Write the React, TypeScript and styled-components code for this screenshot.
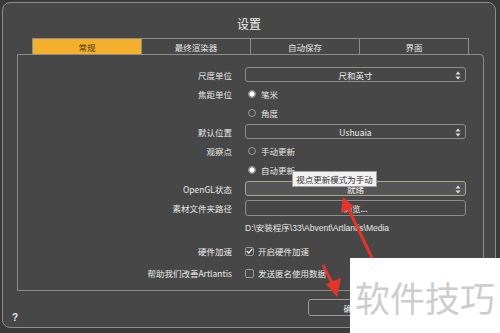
import React from 'react';
import styled, { createGlobalStyle } from 'styled-components';

const GlobalStyle = createGlobalStyle`
	html, body {
		margin: 0;
		padding: 0;
		background: #3a3a3a;
		width: 500px;
		height: 333px;
		overflow: hidden;
	}
	body {
		font-family: "Noto Sans CJK SC", "Liberation Sans", sans-serif;
		color: #e8e8e8;
	}
`;

const Stage = styled.div`
	position: relative;
	width: 500px;
	height: 333px;
	overflow: hidden;
`;

const Window = styled.div`
	position: relative;
	margin: 2px 0 0 2px;
	width: 492px;
	height: 324px;
	background: #474747;
	border: 1px solid #8c8c8c;
	border-radius: 8px;
	display: flex;
	flex-direction: column;
`;

const Title = styled.div`
	height: 35px;
	display: flex;
	align-items: center;
	justify-content: center;
	font-size: 12px;
	color: #f0f0f0;
	padding-top: 5px;
	box-sizing: border-box;
`;

const Tabs = styled.div`
	display: flex;
	margin-left: 29px;
	width: 437px;
	height: 16px;
	position: relative;
	z-index: 1;
`;

const Tab = styled.div<{ $active?: boolean }>`
	flex: 1;
	display: flex;
	align-items: center;
	justify-content: center;
	font-size: 8.5px;
	background: ${(p) => (p.$active ? '#f4b02c' : '#474747')};
	color: ${(p) => (p.$active ? '#4a3510' : '#e8e8e8')};
	border: 1px solid #8c8c8c;
	border-bottom: none;
	border-left: ${(p) => (p.$active ? '1px solid #8c8c8c' : 'none')};
	box-sizing: border-box;
`;

const Panel = styled.div`
	margin: 0 11px 0 14px;
	height: 237px;
	border: 1px solid #8c8c8c;
	border-radius: 0 4px 0 0;
	box-sizing: border-box;
	padding: 10px 16px 0 0;
	display: flex;
	flex-direction: column;
`;

const Row = styled.div<{ $h?: number; $mt?: number }>`
	display: grid;
	grid-template-columns: 214px 221px;
	column-gap: 13px;
	align-items: center;
	height: ${(p) => p.$h ?? 19}px;
	margin-top: ${(p) => p.$mt ?? 0}px;
	position: relative;
`;

const Label = styled.div`
	text-align: right;
	font-size: 8.5px;
	color: #e8e8e8;
	white-space: nowrap;
`;

const Select = styled.div<{ $hl?: boolean }>`
	height: 15px;
	border: 1px solid ${(p) => (p.$hl ? '#a8a88c' : '#8c8c8c')};
	background: ${(p) => (p.$hl ? '#555555' : '#474747')};
	border-radius: 3px;
	box-sizing: border-box;
	display: flex;
	align-items: center;
	justify-content: center;
	position: relative;
	font-size: 8.5px;
	color: #f0f0f0;
`;

const Arrows = styled.svg`
	position: absolute;
	right: 4px;
	top: 3px;
`;

const Button = styled.div`
	height: 16px;
	border: 1px solid #8c8c8c;
	border-radius: 3px;
	box-sizing: border-box;
	display: flex;
	align-items: center;
	justify-content: center;
	font-size: 8.5px;
	color: #f0f0f0;
`;

const Option = styled.div`
	display: flex;
	align-items: center;
	gap: 5px;
	font-size: 8.5px;
	color: #e8e8e8;
	padding-left: 3px;
`;

const Radio = styled.span<{ $on?: boolean }>`
	width: 8px;
	height: 8px;
	border-radius: 50%;
	border: 1px solid #9a9a9a;
	box-sizing: border-box;
	background: ${(p) => (p.$on ? 'radial-gradient(circle, #ffffff 0 2.2px, #c8c8c8 2.6px, #474747 3.2px)' : '#474747')};
`;

const Check = styled.span`
	width: 9px;
	height: 9px;
	border: 1px solid #9a9a9a;
	border-radius: 2px;
	box-sizing: border-box;
	display: flex;
	align-items: center;
	justify-content: center;
`;

const CheckOption = styled(Option)`
	padding-left: 0;
	gap: 4px;
`;

const PathText = styled.div`
	font-size: 8.5px;
	color: #e8e8e8;
	font-family: "Liberation Sans", "Noto Sans CJK SC", sans-serif;
	white-space: nowrap;
`;

const Tooltip = styled.div`
	position: absolute;
	left: 274px;
	top: -8px;
	width: 85px;
	height: 16px;
	background: #f2f2f2;
	border: 1px solid #a0a0a0;
	box-sizing: border-box;
	color: #333;
	font-size: 8.5px;
	display: flex;
	align-items: center;
	justify-content: center;
	z-index: 2;
`;

const Footer = styled.div`
	flex: 1;
	display: flex;
	align-items: center;
	padding: 0 0 0 9px;
	position: relative;
`;

const Help = styled.div`
	font-family: "Liberation Sans", sans-serif;
	font-weight: bold;
	font-size: 10px;
	color: #e8e8e8;
	margin-top: 16px;
`;

const OkButton = styled.div`
	position: absolute;
	left: 305px;
	top: 8px;
	width: 88px;
	height: 17px;
	border: 1px solid #9a9a9a;
	border-radius: 3px;
	box-sizing: border-box;
	display: flex;
	align-items: center;
	justify-content: center;
	font-size: 8.5px;
	color: #f0f0f0;
`;

const Watermark = styled.div`
	position: absolute;
	left: 350px;
	top: 258px;
	width: 150px;
	height: 75px;
	background: #ffffff;
	color: #cdcdcd;
	font-size: 35px;
	line-height: 1;
	display: flex;
	align-items: center;
	padding-left: 5px;
	box-sizing: border-box;
	padding-top: 2px;
	z-index: 4;
	white-space: nowrap;
`;

const Overlay = styled.svg`
	position: absolute;
	left: 0;
	top: 0;
	z-index: 3;
	pointer-events: none;
`;

const SelectArrows = () => (
	<Arrows width="6" height="9" viewBox="0 0 6 9">
		<path d="M0.5 3.5 L3 0.5 L5.5 3.5 Z" fill="#e0e0e0" />
		<path d="M0.5 5.5 L3 8.5 L5.5 5.5 Z" fill="#e0e0e0" />
	</Arrows>
);

const tabs = ['常规', '最终渲染器', '自动保存', '界面'];

const App = () => {
	return (
		<Stage>
			<GlobalStyle />
			<Window>
				<Title>设置</Title>
				<Tabs>
					{tabs.map((t, i) => (
						<Tab key={t} $active={i === 0}>
							{t}
						</Tab>
					))}
				</Tabs>
				<Panel>
					<Row>
						<Label>尺度单位</Label>
						<Select>
							尺和英寸
							<SelectArrows />
						</Select>
					</Row>
					<Row>
						<Label>焦距单位</Label>
						<Option>
							<Radio $on />
							笔米
						</Option>
					</Row>
					<Row>
						<Label />
						<Option>
							<Radio />
							角度
						</Option>
					</Row>
					<Row>
						<Label>默认位置</Label>
						<Select>
							Ushuaia
							<SelectArrows />
						</Select>
					</Row>
					<Row>
						<Label>观察点</Label>
						<Option>
							<Radio />
							手动更新
						</Option>
					</Row>
					<Row>
						<Label>&nbsp;</Label>
						<Option>
							<Radio $on />
							自动更新
						</Option>
					</Row>
					<Row>
						<Label>OpenGL状态</Label>
						<Select $hl>
							就绪
							<SelectArrows />
						</Select>
						<Tooltip>视点更新模式为手动</Tooltip>
					</Row>
					<Row>
						<Label>素材文件夹路径</Label>
						<Button>浏览...</Button>
					</Row>
					<Row>
						<Label />
						<PathText>D:\安装程序\33\Abvent\Artlantis\Media</PathText>
					</Row>
					<Row $h={20} $mt={5}>
						<Label>硬件加速</Label>
						<CheckOption>
							<Check>
								<svg width="7" height="6" viewBox="0 0 7 6">
									<path d="M0.8 3 L2.7 5 L6.3 0.8" stroke="#f0f0f0" strokeWidth="1.3" fill="none" />
								</svg>
							</Check>
							开启硬件加速
						</CheckOption>
					</Row>
					<Row $h={20} $mt={2}>
						<Label>帮助我们改善Artlantis</Label>
						<CheckOption>
							<Check />
							发送匿名使用数据
						</CheckOption>
					</Row>
				</Panel>
				<Footer>
					<Help>?</Help>
					<OkButton>确定</OkButton>
				</Footer>
			</Window>
			<Overlay width="500" height="333" viewBox="0 0 500 333">
				<line x1="374" y1="262" x2="348" y2="208" stroke="#e5352b" strokeWidth="3" />
				<path d="M343 197 L341 213 L354 207 Z" fill="#e5352b" />
				<line x1="323" y1="265" x2="332" y2="283" stroke="#e5352b" strokeWidth="3" />
				<path d="M337 297 L326 284 L341 278 Z" fill="#e5352b" />
			</Overlay>
			<Watermark>软件技巧</Watermark>
		</Stage>
	);
};

export default App;
